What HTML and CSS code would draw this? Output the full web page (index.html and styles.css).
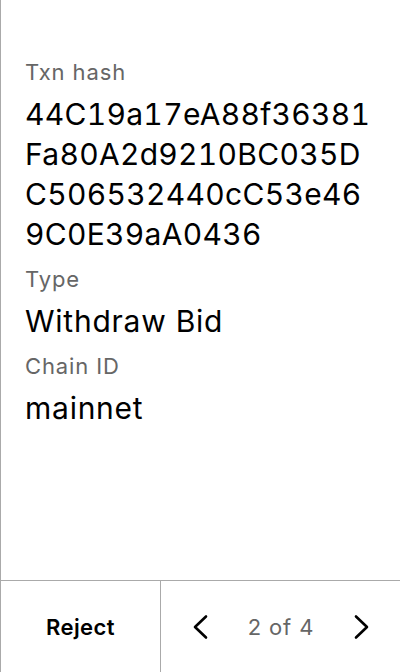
FILE: index.html
```html
<!DOCTYPE html>
<html>
<head>
<meta charset="utf-8">
<link rel="stylesheet" href="styles.css">
</head>
<body>
<div class="screen">
  <main class="content">
    <div class="field">
      <div class="label">Txn hash</div>
      <div class="value hash">44C19a17eA88f36381Fa80A2d9210BC035DC506532440cC53e469C0E39aA0436</div>
    </div>
    <div class="field">
      <div class="label">Type</div>
      <div class="value">Withdraw Bid</div>
    </div>
    <div class="field">
      <div class="label">Chain ID</div>
      <div class="value">mainnet</div>
    </div>
  </main>
  <footer class="footer">
    <button class="reject">Reject</button>
    <div class="pager">
      <svg class="chev" width="16" height="26" viewBox="0 0 16 26"><path d="M14 2.5 L3 13 L14 23.5" fill="none" stroke="#000" stroke-width="2.6" stroke-linecap="round" stroke-linejoin="round"/></svg>
      <span class="count">2 of 4</span>
      <svg class="chev" width="16" height="26" viewBox="0 0 16 26"><path d="M2 2.5 L13 13 L2 23.5" fill="none" stroke="#000" stroke-width="2.6" stroke-linecap="round" stroke-linejoin="round"/></svg>
    </div>
  </footer>
</div>
</body>
</html>
```

FILE: styles.css
```css
html, body {
  margin: 0;
  padding: 0;
  background: #fff;
}
body {
  font-family: Inter, "Noto Sans", sans-serif;
  color: #000;
}
.screen {
  height: 672px;
  box-sizing: border-box;
  border-left: 1px solid #aaa;
  display: flex;
  flex-direction: column;
}
.content {
  flex: 1;
  padding: 58px 24px 0 24px;
  display: flex;
  flex-direction: column;
  gap: 11px;
}
.label {
  font-size: 22px;
  line-height: 28px;
  color: #666;
  letter-spacing: 0.04em;
  margin-bottom: 8px;
}
.value {
  font-size: 30px;
  line-height: 40px;
  letter-spacing: 0.025em;
}
.hash {
  word-break: break-all;
  font-variant-numeric: tabular-nums;
  letter-spacing: 0.3px;
}
.footer {
  height: 92px;
  box-sizing: border-box;
  border-top: 1px solid #aaa;
  display: flex;
}
.reject {
  width: 160px;
  border: none;
  border-right: 1px solid #aaa;
  background: none;
  font-family: Inter, sans-serif;
  font-size: 22px;
  font-weight: 600;
  letter-spacing: 0.02em;
  color: #000;
  padding: 0;
}
.pager {
  flex: 1;
  display: flex;
  align-items: center;
  justify-content: space-between;
  padding: 0 30px 0 31px;
}
.count {
  font-size: 22px;
  color: #666;
  letter-spacing: 0.04em;
}
.chev {
  display: block;
}
```
